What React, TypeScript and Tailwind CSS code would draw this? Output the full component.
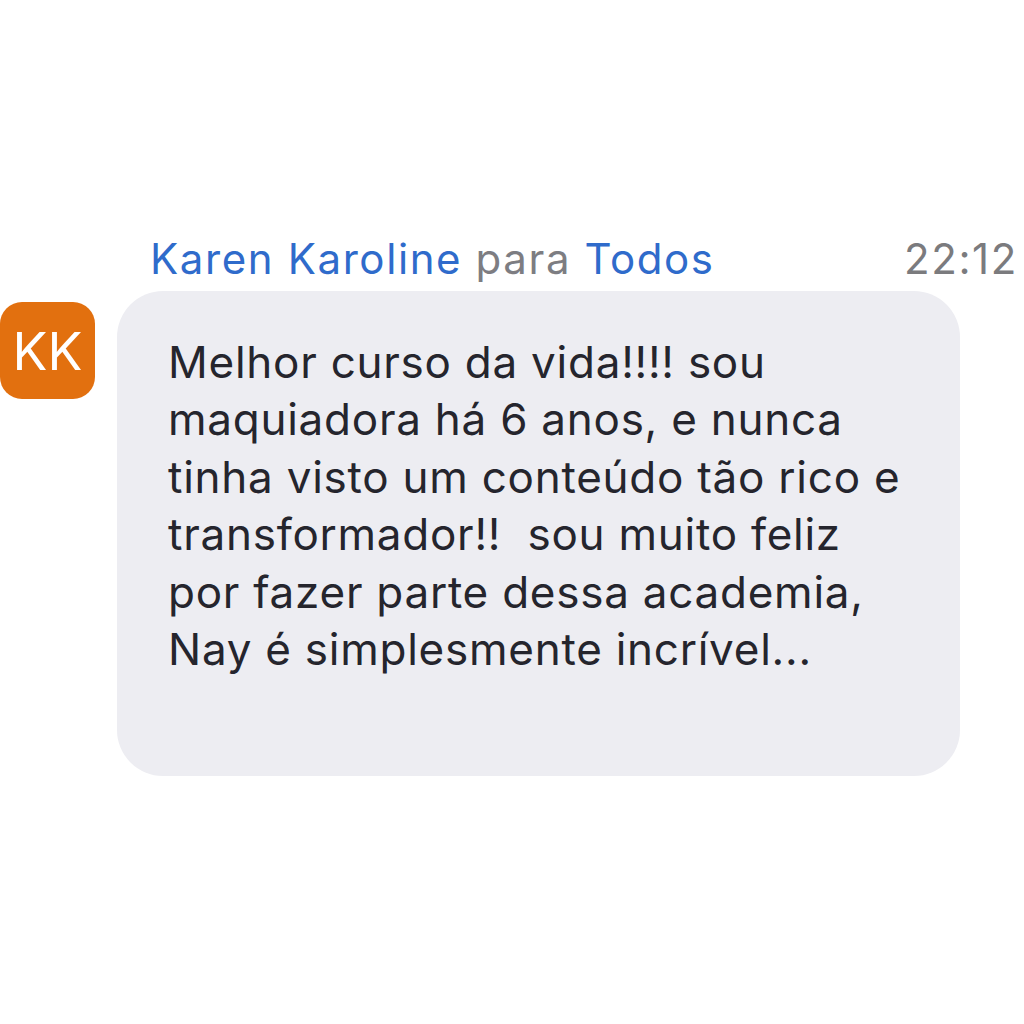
export default function App() {
  const lines = [
    "Melhor curso da vida!!!! sou",
    "maquiadora há 6 anos, e nunca",
    "tinha visto um conteúdo tão rico e",
    "transformador!!  sou muito feliz",
    "por fazer parte dessa academia,",
    "Nay é simplesmente incrível...",
  ];

  return (
    <div className="min-h-screen bg-white pt-[235px] font-['Inter',sans-serif]">
      <div className="flex">
        {/* avatar column */}
        <div className="w-[117px] shrink-0 pt-[67px]">
          <div className="flex h-[97px] w-[95px] items-center justify-center rounded-[22px] bg-[#e2700f] pt-[2px] text-[52px] text-white">
            KK
          </div>
        </div>

        {/* message column */}
        <div className="flex-1 pr-[6px]">
          <div className="flex h-[48px] items-center justify-between pl-[33px] text-[42px] leading-[48px] tracking-[1.6px]">
            <div>
              <span className="text-[#2f6bcb]">Karen Karoline</span>
              <span className="text-[#7d7d82]"> para </span>
              <span className="text-[#2f6bcb]">Todos</span>
            </div>
            <span className="text-[#7b7b7e]">22:12</span>
          </div>

          <div className="mt-[8px] w-[843px] rounded-[46px] bg-[#ededf2] pb-[98px] pl-[51px] pt-[43px] text-[44px] leading-[57.4px] tracking-[0.75px] text-[#25252d]">
            {lines.map((line) => (
              <div key={line} className="whitespace-pre">
                {line}
              </div>
            ))}
          </div>
        </div>
      </div>
    </div>
  );
}
